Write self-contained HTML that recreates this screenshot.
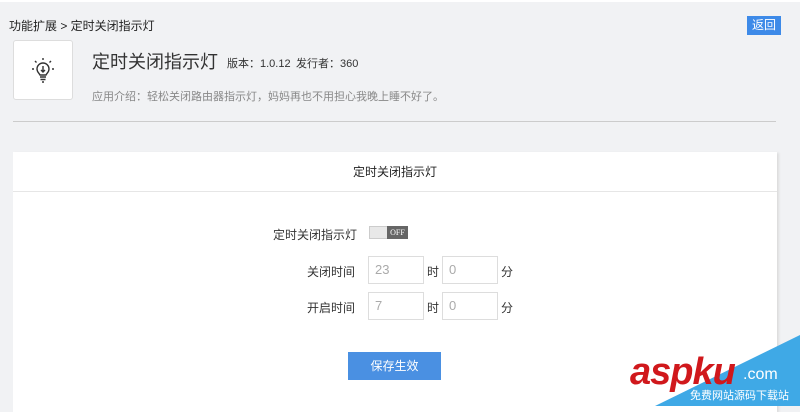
<!DOCTYPE html>
<html><head><meta charset="utf-8"><style>
*{margin:0;padding:0;box-sizing:border-box}
body{width:800px;height:406px;overflow:hidden;background:#f1f2f4;font-family:"Liberation Sans","Noto Sans CJK SC",sans-serif;position:relative;color:#333;font-size:12px}
.a{position:absolute}
.inp{position:absolute;width:56px;height:28px;border:1px solid #ddd;background:#fff;color:#aaa;font-size:13px;padding:5px 0 0 6px}
.lbl{position:absolute;font-size:12px;color:#333}
</style></head><body>
<div class="a" style="left:0;top:0;width:800px;height:2px;background:#fff"></div>
<div class="a" style="left:9px;top:17px;font-size:12px;color:#222">功能扩展 &gt; 定时关闭指示灯</div>
<div class="a" style="left:747px;top:16px;width:34px;height:19px;background:#3d8ae8;color:#fff;font-size:12px;text-align:center;line-height:19px">返回</div>
<div class="a" style="left:13px;top:40px;width:60px;height:60px;background:#fff;border:1px solid #ddd;border-radius:3px">
<svg width="60" height="60" viewBox="0 0 60 60" style="position:absolute;left:-1px;top:-1px" fill="none" stroke="#333" stroke-width="1.4">
<path d="M24 29a6 6 0 1 1 12 0c0 3-2 4-3 6h-6c-1-2-3-3-3-6z"/>
<path d="M30 26v5M28 30l2 2 2-2"/>
<path d="M27 37h6M27.5 39.5h5M29 42h2" stroke-width="1.6"/>
<path d="M30 18v2M22 21l1.5 1.5M38 21l-1.5 1.5M19 29h2M39 29h2"/>
</svg></div>
<div class="a" style="left:92px;top:48px;font-size:18px;color:#333">定时关闭指示灯</div>
<div class="a" style="left:227px;top:55px;font-size:11px;color:#333">版本：1.0.12</div>
<div class="a" style="left:296px;top:55px;font-size:11px;color:#333">发行者：360</div>
<div class="a" style="left:92px;top:88px;font-size:11px;color:#888">应用介绍：轻松关闭路由器指示灯，妈妈再也不用担心我晚上睡不好了。</div>
<div class="a" style="left:13px;top:121px;width:763px;height:1px;background:#ccc"></div>
<div class="a" style="left:13px;top:152px;width:764px;height:260px;background:#fff;box-shadow:2px 1px 2px #ddd">
<div style="height:40px;border-bottom:1px solid #e6e6e6;text-align:center;line-height:40px;font-size:12px;color:#222">定时关闭指示灯</div>
</div>
<div class="lbl" style="left:273px;top:226px">定时关闭指示灯</div>
<div class="a" style="left:369px;top:226px;width:39px;height:13px;background:#e8e8e8;border:1px solid #ccc"></div>
<div class="a" style="left:387px;top:226px;width:21px;height:13px;background:#666;color:#fff;font-size:8px;line-height:13px;text-align:center;font-family:'Liberation Serif',serif">OFF</div>
<div class="lbl" style="left:307px;top:263px">关闭时间</div>
<div class="inp" style="left:368px;top:256px">23</div>
<div class="lbl" style="left:427px;top:263px">时</div>
<div class="inp" style="left:442px;top:256px">0</div>
<div class="lbl" style="left:501px;top:263px">分</div>
<div class="lbl" style="left:307px;top:299px">开启时间</div>
<div class="inp" style="left:368px;top:292px">7</div>
<div class="lbl" style="left:427px;top:299px">时</div>
<div class="inp" style="left:442px;top:292px">0</div>
<div class="lbl" style="left:501px;top:299px">分</div>
<div class="a" style="left:348px;top:352px;width:93px;height:28px;background:#4a90e2;color:#fff;font-size:12px;text-align:center;line-height:28px">保存生效</div>
<svg class="a" style="left:600px;top:330px" width="200" height="76"><polygon points="200,5 200,76 55,76" fill="#3fa9e6"/></svg>
<div class="a" style="left:630px;top:352px;font-size:38px;font-weight:bold;font-style:italic;color:#d0181c;letter-spacing:-1px;line-height:40px">aspku</div>
<div class="a" style="left:743px;top:366px;font-size:16px;color:#fff;line-height:18px">.com</div>
<div class="a" style="left:690px;top:390px;font-size:11px;color:#fff;line-height:13px">免费网站源码下载站</div>
</body></html>
